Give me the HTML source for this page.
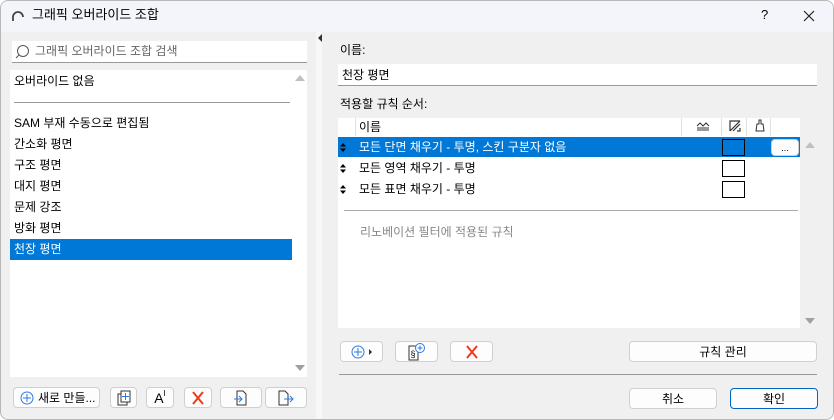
<!DOCTYPE html>
<html><head><meta charset="utf-8"><style>
*{margin:0;padding:0;box-sizing:border-box}
body{width:834px;height:420px;overflow:hidden;background:#fff;font-family:"Liberation Sans","Noto Sans CJK KR",sans-serif;font-size:12px;color:#000;position:relative}
.a{position:absolute}
.t{position:absolute;white-space:nowrap;line-height:14px}
.btn{position:absolute;background:#fdfdfd;border:1px solid #d0d0d0;border-radius:4px;display:flex;align-items:center;justify-content:center}
.w{background:#fff}
</style></head><body>
<div class="a" style="left:0;top:0;width:834px;height:420px;background:#f0f0f0;border:1px solid #b8b8b8;border-radius:8px;overflow:hidden"></div>
<div class="a" style="left:1px;top:1px;width:832px;height:31px;background:#f3f5fa;border-radius:7px 7px 0 0"></div>
<svg class="a" style="left:11px;top:10px" width="14" height="12"><path d="M2 11 V7 A5 5 0 0 1 12 7" fill="none" stroke="#444" stroke-width="1.8"/></svg>
<div class="t" style="left:32px;top:8px;font-size:13px">그래픽 오버라이드 조합</div>
<div class="t" style="left:761px;top:8px;font-size:13px">?</div>
<svg class="a" style="left:803px;top:10px" width="12" height="12"><path d="M1 1L11 11M11 1L1 11" stroke="#222" stroke-width="1.2"/></svg>
<div class="a" style="left:316px;top:32px;width:6px;height:387px;background:#f7f7f7"></div>
<svg class="a" style="left:318px;top:34px" width="5" height="8"><path d="M4 0V8L0 4Z" fill="#333"/></svg>
<div class="a w" style="left:12px;top:41px;width:295px;height:22px;border-bottom:1px solid #999"></div>
<svg class="a" style="left:15px;top:44px" width="16" height="16"><circle cx="8" cy="7" r="5.5" fill="none" stroke="#555"/><path d="M4 11L1 14" stroke="#555"/></svg>
<div class="t" style="left:35px;top:44px;color:#666">그래픽 오버라이드 조합 검색</div>
<div class="a w" style="left:10px;top:70px;width:297px;height:307px"></div>
<svg class="a" style="left:295px;top:74px" width="10" height="8"><path d="M0 7L5 1L10 7Z" fill="#c0c0c0"/></svg>
<svg class="a" style="left:295px;top:364px" width="10" height="8"><path d="M0 1L5 7L10 1Z" fill="#a0a0a0"/></svg>
<div class="t" style="left:14px;top:74px">오버라이드 없음</div>
<div class="a" style="left:14px;top:102px;width:276px;height:1px;background:#999"></div>
<div class="t" style="left:14px;top:116px">SAM 부재 수동으로 편집됨</div>
<div class="t" style="left:14px;top:137px">간소화 평면</div>
<div class="t" style="left:14px;top:158px">구조 평면</div>
<div class="t" style="left:14px;top:179px">대지 평면</div>
<div class="t" style="left:14px;top:200px">문제 강조</div>
<div class="t" style="left:14px;top:221px">방화 평면</div>
<div class="a" style="left:10px;top:239px;width:282px;height:21px;background:#0078d7"></div>
<div class="t" style="left:14px;top:242px;color:#fff">천장 평면</div>
<div class="btn" style="left:13px;top:387px;width:87px;height:21px;justify-content:flex-start;padding-left:6px"><svg width="14" height="14"><circle cx="7" cy="7" r="6" fill="none" stroke="#2a7ae2"/><path d="M7 3V11M3 7H11" stroke="#2a7ae2"/></svg><span style="margin-left:4px">새로 만들...</span></div>
<div class="btn" style="left:110px;top:387px;width:27px;height:21px"><svg width="14" height="16"><rect x="1" y="4" width="9" height="11" fill="none" stroke="#333"/><rect x="4" y="1" width="9" height="11" fill="#fff" stroke="#333"/><path d="M8.5 3V10M5 6.5H12" stroke="#2a7ae2"/></svg></div>
<div class="btn" style="left:146px;top:387px;width:28px;height:21px"><span style="font-size:14px">A</span><span style="font-size:8px;margin-top:-8px">I</span></div>
<div class="btn" style="left:184px;top:387px;width:28px;height:21px"><svg width="14" height="14"><path d="M2 1L12 13M12 1L2 13" stroke="#f03a17" stroke-width="2"/></svg></div>
<div class="btn" style="left:220px;top:387px;width:42px;height:21px"><svg width="16" height="16"><path d="M4 1H10L13 4V15H4Z" fill="none" stroke="#333"/><path d="M1 9H9M6 6L9 9L6 12" fill="none" stroke="#2a7ae2"/></svg></div>
<div class="btn" style="left:265px;top:387px;width:42px;height:21px"><svg width="18" height="16"><path d="M2 1H8L11 4V15H2Z" fill="none" stroke="#333"/><path d="M7 9H16M13 6L16 9L13 12" fill="none" stroke="#2a7ae2"/></svg></div>
<div class="t" style="left:340px;top:43px">이름:</div>
<div class="a w" style="left:338px;top:64px;width:479px;height:22px;border-bottom:1px solid #999"></div>
<div class="t" style="left:342px;top:68px">천장 평면</div>
<div class="t" style="left:340px;top:97px">적용할 규칙 순서:</div>
<div class="a w" style="left:338px;top:118px;width:462px;height:210px"></div>
<div class="a" style="left:355px;top:118px;width:1px;height:18px;background:#e0e0e0"></div>
<div class="a" style="left:681px;top:118px;width:1px;height:18px;background:#e0e0e0"></div>
<div class="a" style="left:721px;top:118px;width:1px;height:18px;background:#e0e0e0"></div>
<div class="a" style="left:746px;top:118px;width:1px;height:18px;background:#e0e0e0"></div>
<div class="a" style="left:770px;top:118px;width:1px;height:18px;background:#e0e0e0"></div>
<div class="t" style="left:359px;top:120px">이름</div>
<svg class="a" style="left:696px;top:121px" width="14" height="10"><path d="M1 5L4 2L7 5L10 2L13 5M1 7H13M1 9H13" fill="none" stroke="#333"/></svg>
<svg class="a" style="left:729px;top:120px" width="12" height="12"><path d="M1 11V1H11M1 11L11 1M4 11L11 4M8 11H11V8" fill="none" stroke="#333" stroke-width="1.2"/></svg>
<svg class="a" style="left:755px;top:119px" width="10" height="13"><path d="M4 1H6V5H8L9 12H1L2 5H4Z" fill="none" stroke="#333"/></svg>
<div class="a" style="left:338px;top:137px;width:462px;height:20px;background:#0078d7"></div>
<svg class="a" style="left:340px;top:143px" width="6" height="9"><path d="M0 3.5L3 0L6 3.5ZM0 5.5L3 9L6 5.5Z" fill="#000"/></svg>
<div class="t" style="left:359px;top:140px;color:#fff">모든 단면 채우기 - 투명, 스킨 구분자 없음</div>
<div class="a" style="left:722px;top:139px;width:23px;height:17px;border:1px solid #000"></div>
<div class="btn" style="left:771px;top:139px;width:28px;height:17px;font-size:9px">...</div>
<svg class="a" style="left:340px;top:164px" width="6" height="9"><path d="M0 3.5L3 0L6 3.5ZM0 5.5L3 9L6 5.5Z" fill="#000"/></svg>
<div class="t" style="left:359px;top:161px">모든 영역 채우기 - 투명</div>
<div class="a" style="left:722px;top:160px;width:23px;height:17px;border:1px solid #000"></div>
<svg class="a" style="left:340px;top:185px" width="6" height="9"><path d="M0 3.5L3 0L6 3.5ZM0 5.5L3 9L6 5.5Z" fill="#000"/></svg>
<div class="t" style="left:359px;top:182px">모든 표면 채우기 - 투명</div>
<div class="a" style="left:722px;top:181px;width:23px;height:17px;border:1px solid #000"></div>
<div class="a" style="left:344px;top:210px;width:454px;height:1px;background:#aaa"></div>
<div class="t" style="left:360px;top:225px;color:#888">리노베이션 필터에 적용된 규칙</div>
<svg class="a" style="left:805px;top:141px" width="10" height="8"><path d="M0 7L5 1L10 7Z" fill="#c0c0c0"/></svg>
<svg class="a" style="left:805px;top:317px" width="10" height="8"><path d="M0 1L5 7L10 1Z" fill="#a0a0a0"/></svg>
<div class="btn" style="left:340px;top:341px;width:43px;height:21px"><svg width="22" height="14"><circle cx="7" cy="7" r="6" fill="none" stroke="#2a7ae2"/><path d="M7 3V11M3 7H11" stroke="#2a7ae2"/><path d="M18 4L21 7L18 10Z" fill="#333"/></svg></div>
<div class="btn" style="left:395px;top:341px;width:43px;height:21px"><svg width="20" height="18"><rect x="2" y="3" width="9" height="14" fill="none" stroke="#333"/><text x="3.5" y="14" font-size="9" font-family="Liberation Sans">§</text><circle cx="13" cy="5" r="4.5" fill="#fff" stroke="#2a7ae2"/><path d="M13 2.5V7.5M10.5 5H15.5" stroke="#2a7ae2"/></svg></div>
<div class="btn" style="left:450px;top:341px;width:43px;height:21px"><svg width="14" height="14"><path d="M2 1L12 13M12 1L2 13" stroke="#f03a17" stroke-width="2"/></svg></div>
<div class="btn" style="left:629px;top:341px;width:188px;height:21px">규칙 관리</div>
<div class="a" style="left:339px;top:374px;width:478px;height:1px;background:#999"></div>
<div class="btn" style="left:629px;top:388px;width:88px;height:21px">취소</div>
<div class="btn" style="left:730px;top:388px;width:88px;height:21px;border:1px solid #0067c0">확인</div>
</body></html>
